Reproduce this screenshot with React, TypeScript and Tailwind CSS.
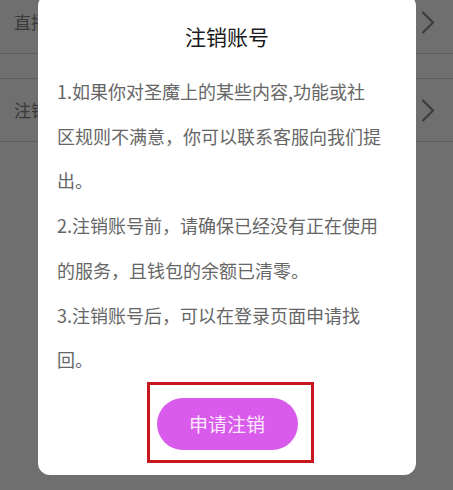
const rows = ['直播设置', '注销账号'];

function Chevron() {
  return (
    <svg width="14" height="23" viewBox="0 0 14 23" fill="none" className="text-[#8a8a8a]">
      <polyline points="2,1.5 12,11.5 2,21.5" stroke="currentColor" strokeWidth="2.2" strokeLinecap="round" strokeLinejoin="round" />
    </svg>
  );
}

function SettingRow({ label }: { label: string }) {
  return (
    <div className="flex h-[63px] items-center justify-between border-b border-[#d4d4d4] pl-[14px] pr-[18px]">
      <span className="text-[17px] text-[#858585]">{label}</span>
      <Chevron />
    </div>
  );
}

export default function App() {
  return (
    <div
      className="relative h-[490px] w-[453px] overflow-hidden bg-white"
      style={{ fontFamily: '"Noto Sans CJK SC", "Noto Sans", sans-serif' }}
    >
      {/* page under the dialog */}
      <div className="-mt-[9px]">
        <SettingRow label={rows[0]} />
        <div className="h-[25px] border-b border-[#d4d4d4]" />
        <SettingRow label={rows[1]} />
      </div>

      {/* dim overlay */}
      <div className="absolute inset-0 bg-black/[0.565]" />

      {/* dialog */}
      <div className="absolute left-[38px] top-[-6px] flex h-[481px] w-[378px] flex-col items-center rounded-[12px] bg-white">
        <h1 className="pt-[28px] text-[21px] leading-[28px] text-[#1a1a1a]">注销账号</h1>

        <div className="mt-[19px] w-[325px] self-start pl-[19px] text-[18px] leading-[44.7px] text-[#666666]" style={{ boxSizing: 'content-box' }}>
          <p>1.如果你对圣魔上的某些内容,功能或社区规则不满意，你可以联系客服向我们提出。</p>
          <p>2.注销账号前，请确保已经没有正在使用的服务，且钱包的余额已清零。</p>
          <p>3.注销账号后，可以在登录页面申请找回。</p>
        </div>

        <div className="relative mt-[16px]">
          <button className="h-[52px] w-[141px] rounded-full bg-[#d95bec] text-[19px] text-[#fbeafd]">
            申请注销
          </button>
          {/* highlight box */}
          <div className="pointer-events-none absolute -bottom-[13px] -left-[10px] -right-[16px] -top-[16px] border-[3px] border-[#c8161e]" />
        </div>
      </div>
    </div>
  );
}
